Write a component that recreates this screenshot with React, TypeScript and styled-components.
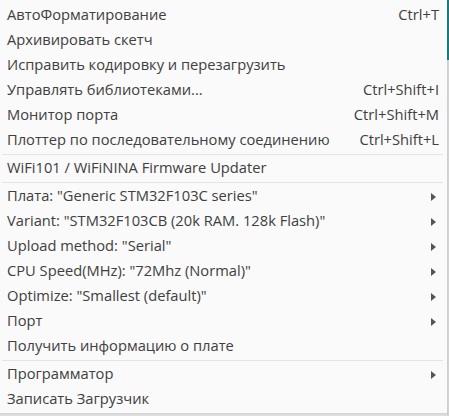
import React from 'react';
import styled, { createGlobalStyle } from 'styled-components';

const GlobalStyle = createGlobalStyle`
    html, body {
        margin: 0;
        padding: 0;
        width: 449px;
        height: 416px;
        overflow: hidden;
        background: linear-gradient(180deg, #1f7a7c 0px, #1f7a7c 60px, #d4d4d4 60px) right top / 2px 100% no-repeat, #e6e6e6;
    }
`;

const Menu = styled.div`
    width: 447px;
    box-sizing: border-box;
    padding: 3px 0 1px;
    background: #fafafa;
    font-family: 'Open Sans', 'Noto Sans', sans-serif;
    font-size: 14.7px;
    color: #404040;
    box-shadow: 0 1px 0 #d6d6d6, 0 2px 2px rgba(0, 0, 0, 0.08);
`;

const Item = styled.div`
    height: 25px;
    box-sizing: border-box;
    padding: 0 8px 3px 7px;
    display: flex;
    align-items: center;
    justify-content: space-between;
    white-space: nowrap;
`;

const Shortcut = styled.span`
    margin-left: 16px;
`;

const Arrow = styled.span`
    width: 0;
    height: 0;
    margin: 3px 3px 0 0;
    border-top: 4.5px solid transparent;
    border-bottom: 4.5px solid transparent;
    border-left: 5px solid #555;
`;

const Separator = styled.div`
    height: 1px;
    margin: 1px 4px 1px 2px;
    background: #e4e4e4;
`;

type Entry = { label: string; shortcut?: string; submenu?: boolean } | 'sep';

const entries: Entry[] = [
    { label: 'АвтоФорматирование', shortcut: 'Ctrl+T' },
    { label: 'Архивировать скетч' },
    { label: 'Исправить кодировку и перезагрузить' },
    { label: 'Управлять библиотеками...', shortcut: 'Ctrl+Shift+I' },
    { label: 'Монитор порта', shortcut: 'Ctrl+Shift+M' },
    { label: 'Плоттер по последовательному соединению', shortcut: 'Ctrl+Shift+L' },
    'sep',
    { label: 'WiFi101 / WiFiNINA Firmware Updater' },
    'sep',
    { label: 'Плата: "Generic STM32F103C series"', submenu: true },
    { label: 'Variant: "STM32F103CB (20k RAM. 128k Flash)"', submenu: true },
    { label: 'Upload method: "Serial"', submenu: true },
    { label: 'CPU Speed(MHz): "72Mhz (Normal)"', submenu: true },
    { label: 'Optimize: "Smallest (default)"', submenu: true },
    { label: 'Порт', submenu: true },
    { label: 'Получить информацию о плате' },
    'sep',
    { label: 'Программатор', submenu: true },
    { label: 'Записать Загрузчик' },
];

const App = () => {
    return (
        <>
            <GlobalStyle />
            <Menu>
                {entries.map((e, i) =>
                    e === 'sep' ? (
                        <Separator key={i} />
                    ) : (
                        <Item key={i}>
                            <span>{e.label}</span>
                            {e.shortcut && <Shortcut>{e.shortcut}</Shortcut>}
                            {e.submenu && <Arrow />}
                        </Item>
                    )
                )}
            </Menu>
        </>
    );
};

export default App;
